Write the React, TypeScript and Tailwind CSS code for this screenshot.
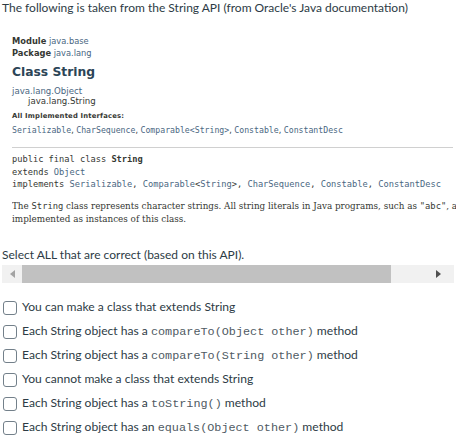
import React from "react";

function Mono({ children }: { children: React.ReactNode }) {
  return <span className="font-['Liberation_Mono',monospace] text-[11.8px] text-[#4f5a63]">{children}</span>;
}

function Row({ children }: { children: React.ReactNode }) {
  return (
    <div className="flex items-center h-[24px]">
      <span className="w-[14px] h-[14px] ml-[3px] mr-[5px] rounded-[3px] border border-[#73808a] bg-white shrink-0" />
      <span className="text-[12.1px] text-[#2d3b45] whitespace-nowrap">{children}</span>
    </div>
  );
}

export default function App() {
  return (
    <div className="w-[456px] h-[443px] bg-white overflow-hidden font-['Lato',sans-serif]">
      <div className="pl-[2px] pt-[0px] text-[12px] leading-[16px] text-[#2d3b45]">
        The following is taken from the String API (from Oracle's Java documentation)
      </div>
      <div className="pl-[12px] pt-[19px] font-['DejaVu_Sans',sans-serif] text-[#353833]">
        <div className="text-[8.3px] leading-[12px]"><b>Module</b> <span className="text-[#4a6782]">java.base</span></div>
        <div className="text-[8.3px] leading-[12px]"><b>Package</b> <span className="text-[#4a6782]">java.lang</span></div>
        <div className="text-[12.3px] leading-[18px] font-bold text-[#2c4557] mt-[4px]">Class String</div>
        <div className="text-[8.6px] leading-[10px] mt-[5px] text-[#4a6782]">java.lang.Object</div>
        <div className="text-[8.6px] leading-[10px] pl-[16px]">java.lang.String</div>
        <div className="text-[6.8px] leading-[10px] font-bold mt-[5px] tracking-[0.2px]">All Implemented Interfaces:</div>
        <div className="text-[8px] leading-[12px] mt-[3px] whitespace-nowrap">
          <span className="font-['DejaVu_Sans_Mono',monospace] text-[8.2px] text-[#4a6782]">Serializable</span>,{" "}
          <span className="font-['DejaVu_Sans_Mono',monospace] text-[8.2px] text-[#4a6782]">CharSequence</span>,{" "}
          <span className="font-['DejaVu_Sans_Mono',monospace] text-[8.2px] text-[#4a6782]">Comparable&lt;String&gt;</span>,{" "}
          <span className="font-['DejaVu_Sans_Mono',monospace] text-[8.2px] text-[#4a6782]">Constable</span>,{" "}
          <span className="font-['DejaVu_Sans_Mono',monospace] text-[8.2px] text-[#4a6782]">ConstantDesc</span>
        </div>
        <div className="h-px bg-[#d0d0d0] mt-[10px] mr-[3px]" />
        <div className="font-['DejaVu_Sans_Mono',monospace] text-[8.7px] leading-[12.5px] mt-[5px] whitespace-nowrap">
          <div>public final class <b>String</b></div>
          <div>extends <span className="text-[#4a6782]">Object</span></div>
          <div>
            implements <span className="text-[#4a6782]">Serializable</span>,{" "}
            <span className="text-[#4a6782]">Comparable</span>&lt;<span className="text-[#4a6782]">String</span>&gt;,{" "}
            <span className="text-[#4a6782]">CharSequence</span>, <span className="text-[#4a6782]">Constable</span>,{" "}
            <span className="text-[#4a6782]">ConstantDesc</span>
          </div>
        </div>
        <div className="font-['DejaVu_Serif',serif] text-[8.8px] leading-[13px] mt-[9px] whitespace-nowrap overflow-hidden">
          <div>
            The <span className="font-['DejaVu_Sans_Mono',monospace]">String</span> class represents character strings. All string literals in Java programs, such as{" "}
            <span className="font-['DejaVu_Sans_Mono',monospace]">"abc"</span>, a
          </div>
          <div>implemented as instances of this class.</div>
        </div>
      </div>
      <div className="pl-[2px] mt-[21px] text-[12px] leading-[16px] text-[#2d3b45]">
        Select ALL that are correct (based on this API).
      </div>
      <div className="mt-[2px] mx-[2px] h-[18px] bg-[#f1f1f1] flex items-center">
        <div className="w-[20px] flex justify-center">
          <svg width="5" height="8" viewBox="0 0 5 8"><path d="M5 0 L0 4 L5 8 Z" fill="#a3a3a3" /></svg>
        </div>
        <div className="w-[369px] h-full bg-[#c1c1c1]" />
        <div className="flex-1 flex justify-end pr-[13px]">
          <svg width="5" height="8" viewBox="0 0 5 8"><path d="M0 0 L5 4 L0 8 Z" fill="#505050" /></svg>
        </div>
      </div>
      <div className="mt-[13px]">
        <Row>You can make a class that extends String</Row>
        <Row>Each String object has a <Mono>compareTo(Object other)</Mono> method</Row>
        <Row>Each String object has a <Mono>compareTo(String other)</Mono> method</Row>
        <Row>You cannot make a class that extends String</Row>
        <Row>Each String object has a <Mono>toString()</Mono> method</Row>
        <Row>Each String object has an <Mono>equals(Object other)</Mono> method</Row>
      </div>
    </div>
  );
}
